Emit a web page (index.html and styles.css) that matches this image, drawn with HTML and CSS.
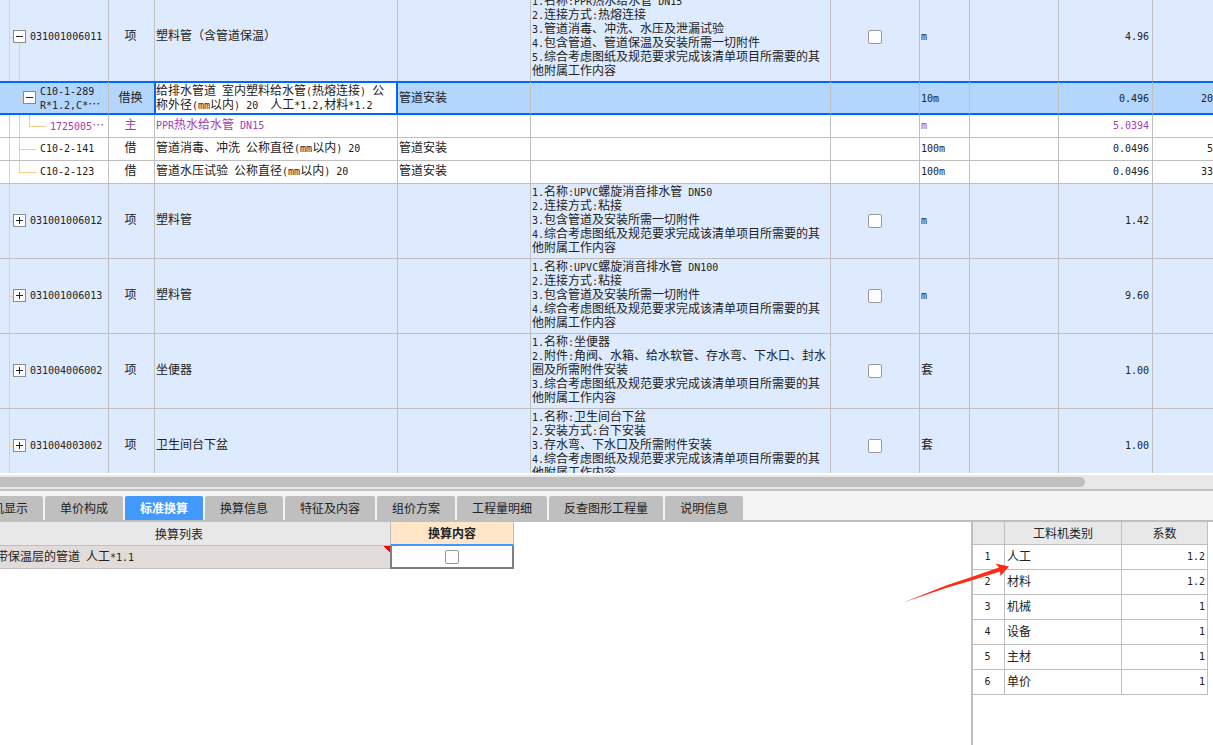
FILE: index.html
```html
<!DOCTYPE html>
<html lang="zh-CN">
<head>
<meta charset="utf-8">
<title>标准换算</title>
<link rel="stylesheet" href="styles.css">
</head>
<body>
<main class="page">
  <section class="bill">
    <table class="grid">
      <colgroup>
        <col class="c-code"><col class="c-kind"><col class="c-name"><col class="c-major"><col class="c-desc"><col class="c-main"><col class="c-unit"><col class="c-expr"><col class="c-qty"><col>
      </colgroup>
      <tbody>
        <tr class="item before-selected">
          <td class="tree root open"><div class="code"><button class="toggle minus" aria-label="收起"></button><span class="n">031001006011</span></div></td>
          <td class="center">项</td>
          <td>塑料管（含管道保温）</td>
          <td></td>
          <td><span class="n">1.</span>名称<span class="n">:PPR</span>热水给水管<span class="n"> DN15</span><br><span class="n">2.</span>连接方式<span class="n">:</span>热熔连接<br><span class="n">3.</span>管道消毒、冲洗、水压及泄漏试验<br><span class="n">4.</span>包含管道、管道保温及安装所需一切附件<br><span class="n">5.</span>综合考虑图纸及规范要求完成该清单项目所需要的其他附属工作内容</td>
          <td class="pick"><input type="checkbox" class="check" aria-label="主要清单"></td>
          <td><span class="n">m</span></td>
          <td></td>
          <td class="right"><span class="n">4.96</span></td>
          <td></td>
        </tr>
        <tr class="selected">
          <td class="tree child open-child"><div class="code level2"><button class="toggle minus" aria-label="收起"></button><span><span class="n">C10-1-289</span><br><span class="n">R*1.2,C*</span>…</span></div></td>
          <td class="center">借换</td>
          <td class="current"><span>给排水管道<span class="n"> </span>室内塑料给水管<span class="n">(</span>热熔连接<span class="n">) </span>公称外径<span class="n">(mm</span>以内<span class="n">) 20&nbsp; </span>人工<span class="n">*1.2,</span>材料<span class="n">*1.2</span></span></td>
          <td>管道安装</td>
          <td></td>
          <td></td>
          <td><span class="n">10m</span></td>
          <td></td>
          <td class="right"><span class="n">0.496</span></td>
          <td class="cut"><span class="n">20</span></td>
        </tr>
        <tr class="material">
          <td class="tree leaf"><div class="code level4"><span><span class="n">1725005</span>…</span></div></td>
          <td class="center">主</td>
          <td><span class="n">PPR</span>热水给水管<span class="n"> DN15</span></td>
          <td></td>
          <td></td>
          <td></td>
          <td><span class="n">m</span></td>
          <td></td>
          <td class="right"><span class="n">5.0394</span></td>
          <td></td>
        </tr>
        <tr>
          <td class="tree child"><div class="code level3"><span class="n">C10-2-141</span></div></td>
          <td class="center">借</td>
          <td>管道消毒、冲洗<span class="n"> </span>公称直径<span class="n">(mm</span>以内<span class="n">) 20</span></td>
          <td>管道安装</td>
          <td></td>
          <td></td>
          <td><span class="n">100m</span></td>
          <td></td>
          <td class="right"><span class="n">0.0496</span></td>
          <td class="cut"><span class="n">5</span></td>
        </tr>
        <tr>
          <td class="tree last-child"><div class="code level3"><span class="n">C10-2-123</span></div></td>
          <td class="center">借</td>
          <td>管道水压试验<span class="n"> </span>公称直径<span class="n">(mm</span>以内<span class="n">) 20</span></td>
          <td>管道安装</td>
          <td></td>
          <td></td>
          <td><span class="n">100m</span></td>
          <td></td>
          <td class="right"><span class="n">0.0496</span></td>
          <td class="cut"><span class="n">33</span></td>
        </tr>
        <tr class="item">
          <td class="tree root"><div class="code"><button class="toggle plus" aria-label="展开"></button><span class="n">031001006012</span></div></td>
          <td class="center">项</td>
          <td>塑料管</td>
          <td></td>
          <td><span class="n">1.</span>名称<span class="n">:UPVC</span>螺旋消音排水管<span class="n"> DN50</span><br><span class="n">2.</span>连接方式<span class="n">:</span>粘接<br><span class="n">3.</span>包含管道及安装所需一切附件<br><span class="n">4.</span>综合考虑图纸及规范要求完成该清单项目所需要的其他附属工作内容</td>
          <td class="pick"><input type="checkbox" class="check" aria-label="主要清单"></td>
          <td><span class="n">m</span></td>
          <td></td>
          <td class="right"><span class="n">1.42</span></td>
          <td></td>
        </tr>
        <tr class="item">
          <td class="tree root"><div class="code"><button class="toggle plus" aria-label="展开"></button><span class="n">031001006013</span></div></td>
          <td class="center">项</td>
          <td>塑料管</td>
          <td></td>
          <td><span class="n">1.</span>名称<span class="n">:UPVC</span>螺旋消音排水管<span class="n"> DN100</span><br><span class="n">2.</span>连接方式<span class="n">:</span>粘接<br><span class="n">3.</span>包含管道及安装所需一切附件<br><span class="n">4.</span>综合考虑图纸及规范要求完成该清单项目所需要的其他附属工作内容</td>
          <td class="pick"><input type="checkbox" class="check" aria-label="主要清单"></td>
          <td><span class="n">m</span></td>
          <td></td>
          <td class="right"><span class="n">9.60</span></td>
          <td></td>
        </tr>
        <tr class="item">
          <td class="tree root"><div class="code"><button class="toggle plus" aria-label="展开"></button><span class="n">031004006002</span></div></td>
          <td class="center">项</td>
          <td>坐便器</td>
          <td></td>
          <td><span class="n">1.</span>名称<span class="n">:</span>坐便器<br><span class="n">2.</span>附件<span class="n">:</span>角阀、水箱、给水软管、存水弯、下水口、封水圈及所需附件安装<br><span class="n">3.</span>综合考虑图纸及规范要求完成该清单项目所需要的其他附属工作内容</td>
          <td class="pick"><input type="checkbox" class="check" aria-label="主要清单"></td>
          <td>套</td>
          <td></td>
          <td class="right"><span class="n">1.00</span></td>
          <td></td>
        </tr>
        <tr class="item">
          <td class="tree root"><div class="code"><button class="toggle plus" aria-label="展开"></button><span class="n">031004003002</span></div></td>
          <td class="center">项</td>
          <td>卫生间台下盆</td>
          <td></td>
          <td><span class="n">1.</span>名称<span class="n">:</span>卫生间台下盆<br><span class="n">2.</span>安装方式<span class="n">:</span>台下安装<br><span class="n">3.</span>存水弯、下水口及所需附件安装<br><span class="n">4.</span>综合考虑图纸及规范要求完成该清单项目所需要的其他附属工作内容</td>
          <td class="pick"><input type="checkbox" class="check" aria-label="主要清单"></td>
          <td>套</td>
          <td></td>
          <td class="right"><span class="n">1.00</span></td>
          <td></td>
        </tr>
      </tbody>
    </table>
  </section>

  <div class="scrollbar"><div class="thumb"></div></div>

  <nav class="tabs">
    <button class="tab">工料机显示</button>
    <button class="tab">单价构成</button>
    <button class="tab active">标准换算</button>
    <button class="tab">换算信息</button>
    <button class="tab">特征及内容</button>
    <button class="tab">组价方案</button>
    <button class="tab">工程量明细</button>
    <button class="tab">反查图形工程量</button>
    <button class="tab">说明信息</button>
  </nav>

  <section class="detail">
    <div class="convert">
      <table class="convert-table">
        <thead>
          <tr><th class="list-head">换算列表</th><th class="content-head">换算内容</th></tr>
        </thead>
        <tbody>
          <tr>
            <td class="rule">带保温层的管道<span class="n"> </span>人工<span class="n">*1.1</span></td>
            <td class="content-cell"><input type="checkbox" class="check" aria-label="换算内容"></td>
          </tr>
        </tbody>
      </table>
    </div>
    <aside class="factors">
      <table class="factor-table">
        <thead>
          <tr><th class="f-index"></th><th class="f-type">工料机类别</th><th class="f-value">系数</th></tr>
        </thead>
        <tbody>
          <tr><td class="center"><span class="n">1</span></td><td>人工</td><td class="right"><span class="n">1.2</span></td></tr>
          <tr><td class="center"><span class="n">2</span></td><td>材料</td><td class="right"><span class="n">1.2</span></td></tr>
          <tr><td class="center"><span class="n">3</span></td><td>机械</td><td class="right"><span class="n">1</span></td></tr>
          <tr><td class="center"><span class="n">4</span></td><td>设备</td><td class="right"><span class="n">1</span></td></tr>
          <tr><td class="center"><span class="n">5</span></td><td>主材</td><td class="right"><span class="n">1</span></td></tr>
          <tr><td class="center"><span class="n">6</span></td><td>单价</td><td class="right"><span class="n">1</span></td></tr>
        </tbody>
      </table>
      <svg class="arrow" width="108" height="42" viewBox="0 0 108 42" aria-hidden="true">
        <path d="M0 40.5 L43 23.5 L70 14.5 L96 5.5 L92.5 1.5 L106 4.5 L97.5 14 L97 9.5 L70 18 L43 26 Z" fill="#ff2a17"/>
      </svg>
    </aside>
  </section>
</main>
</body>
</html>
```
FILE: styles.css
```css
:root {
  --line: #bfbfbf;
  --tree: #ffc987;
  --select: #0066ff;
  --text: #222;
}

* { box-sizing: border-box; }

body {
  margin: 0;
  background: #fff;
  color: var(--text);
  font: 12px/14px "Noto Sans CJK SC", sans-serif;
}

button { font: inherit; color: inherit; }

.page {
  display: flex;
  flex-direction: column;
  height: 100vh;
  overflow: hidden;
}

/* Half-width characters: 6px per character, half of a Chinese one */
.n {
  font-family: "DejaVu Sans Mono", "Liberation Mono", monospace;
  font-size: 10px;
  line-height: 1px;
}

.check {
  appearance: none;
  display: block;
  width: 14px;
  height: 14px;
  margin: 0 auto;
  border: 1px solid #999;
  border-radius: 2px;
  background: #fff;
}

/* Bill of quantities */
.bill {
  flex: 473 1 0;
  min-height: 0;
  overflow: hidden;
}

.grid {
  width: 100%;
  margin-top: -7px;
  table-layout: fixed;
  border-collapse: separate;
  border-spacing: 0;
}

.c-code { width: 109px; }
.c-kind { width: 46px; }
.c-name { width: 243px; }
.c-major { width: 133px; }
.c-desc { width: 300px; }
.c-main { width: 89px; }
.c-unit { width: 50px; }
.c-expr { width: 89px; }
.c-qty { width: 94px; }

.grid td {
  height: 23px;
  padding: 0 1px 4px;
  border-right: 1px solid var(--line);
  border-bottom: 1px solid var(--line);
  vertical-align: middle;
}

.grid td.center { padding-right: 3px; text-align: center; }
.grid td.right { padding-right: 3px; text-align: right; }
.grid td.pick { padding: 2px 1px; }
.grid td:last-child { border-right: 0; }
.grid td.cut { padding-right: 0; text-align: right; }

.item td { background-color: #deebff; }
.before-selected td { border-bottom: 0; }
.material { color: #a23db8; }

/* Tree column */
.grid td.tree {
  padding: 1px 0 3px 13px;
  background-image: linear-gradient(var(--tree), var(--tree));
  background-position: 9px 0;
  background-size: 1px 100%;
  background-repeat: no-repeat;
}

.grid td.root {
  background-image: linear-gradient(var(--tree), var(--tree)), linear-gradient(var(--tree), var(--tree));
  background-position: 9px 0, 9px 50%;
  background-size: 1px 100%, 4px 1px;
}

.grid td.open {
  background-image: linear-gradient(var(--tree), var(--tree)), linear-gradient(var(--tree), var(--tree)), linear-gradient(var(--tree), var(--tree));
  background-position: 9px 0, 9px 50%, 19px 100%;
  background-size: 1px 100%, 4px 1px, 1px 50%;
}

.grid td.child,
.grid td.last-child,
.grid td.leaf {
  background-image: linear-gradient(var(--tree), var(--tree)), linear-gradient(var(--tree), var(--tree)), linear-gradient(var(--tree), var(--tree));
  background-position: 9px 0, 19px 0, 19px 50%;
  background-size: 1px 100%, 1px 100%, 17px 1px;
}

.grid td.last-child { background-size: 1px 100%, 1px 50%, 17px 1px; }

.grid td.leaf,
.grid td.open-child {
  background-image: linear-gradient(var(--tree), var(--tree)), linear-gradient(var(--tree), var(--tree)), linear-gradient(var(--tree), var(--tree)), linear-gradient(var(--tree), var(--tree));
}

.grid td.leaf {
  background-position: 9px 0, 19px 0, 29px 0, 29px 50%;
  background-size: 1px 100%, 1px 100%, 1px 50%, 17px 1px;
}

.grid td.open-child {
  background-position: 9px 0, 19px 0, 29px 100%, 19px 50%;
  background-size: 1px 100%, 1px 100%, 1px 50%, 4px 1px;
}

/* Selected row */
.grid .selected td {
  padding-top: 0;
  padding-bottom: 2px;
  border-top: 2px solid var(--select);
  border-bottom: 2px solid var(--select);
  background-color: #b3d6ff;
}

.grid .selected td:nth-child(2) { border-right-color: var(--select); }

.grid .selected td.current {
  padding-left: 0;
  border-left: 1px solid var(--select);
  border-right: 2px solid var(--select);
  background: #fff;
}

.code {
  display: flex;
  align-items: center;
  gap: 4px;
  white-space: nowrap;
}

.level2 { padding-left: 10px; }
.level3 { padding-left: 27px; }
.level4 { padding-left: 37px; }

.toggle {
  flex: none;
  width: 13px;
  height: 13px;
  padding: 0;
  border: 1px solid #8a8a8a;
  border-radius: 0;
  background: #fff linear-gradient(#222, #222) center / 7px 1px no-repeat;
}

.plus {
  background-image: linear-gradient(#222, #222), linear-gradient(#222, #222);
  background-size: 7px 1px, 1px 7px;
}

/* Horizontal scrollbar */
.scrollbar {
  flex: none;
  padding: 2px 0;
  border-top: 2px solid #fff;
  border-bottom: 2px solid var(--line);
  background: #e8e8e8;
}

.thumb {
  width: 1085px;
  max-width: 90%;
  height: 10px;
  border-radius: 0 5px 5px 0;
  background: var(--line);
}

/* Tabs */
.tabs {
  flex: none;
  display: flex;
  gap: 2px;
  padding-top: 5px;
  border-bottom: 2px solid var(--line);
  background: #f4f4f4;
}

.tab {
  flex: none;
  height: 24px;
  padding: 0 15px;
  border: 0;
  border-radius: 2px 2px 0 0;
  background: var(--line);
}

.tab:first-child { margin-left: -47px; }

.active {
  background: #4499ff;
  color: #fff;
  font-weight: 700;
}

/* Detail area */
.detail {
  flex: 223 1 0;
  min-height: 0;
  display: flex;
}

.convert {
  flex: 1;
  min-width: 0;
  overflow: hidden;
}

.convert-table {
  width: 546px;
  margin-left: -32px;
  table-layout: fixed;
  border-collapse: separate;
  border-spacing: 0;
}

.convert-table th { height: 24px; padding: 0; }

.list-head {
  width: 422px;
  border-bottom: 1px solid var(--line);
  background: #e8e8e8;
  font-weight: 400;
}

.content-head {
  border: solid var(--line);
  border-width: 0 1px 2px;
  border-bottom-color: #3f98ff;
  background: #ffe6c8;
}

.rule {
  height: 23px;
  padding: 0 0 2px 28px;
  border-bottom: 1px solid var(--line);
  background: linear-gradient(to top right, transparent 50%, #f00 50%) 100% 0 / 7px 6px no-repeat #e1dcd9;
}

.content-cell {
  padding: 0;
  border: 2px solid #808080;
  border-top: 0;
}

.factors {
  position: relative;
  flex: 0 0 242px;
  padding-right: 5px;
  border-left: 2px solid var(--line);
}

.factor-table {
  width: 100%;
  table-layout: fixed;
  border-collapse: separate;
  border-spacing: 0;
}

.factor-table th {
  height: 23px;
  padding: 0;
  border-right: 1px solid var(--line);
  border-bottom: 1px solid var(--line);
  background: #e8e8e8;
  font-weight: 400;
}

.factor-table td {
  height: 25px;
  padding: 0 2px 2px;
  border-right: 1px solid var(--line);
  border-bottom: 1px solid var(--line);
}

.factor-table .center { padding: 0 4px 4px 2px; text-align: center; }
.factor-table .right { padding-bottom: 4px; text-align: right; }

.f-index { width: 32px; }
.f-type { width: 117px; }

.arrow {
  position: absolute;
  left: -70px;
  top: 40px;
}
```
